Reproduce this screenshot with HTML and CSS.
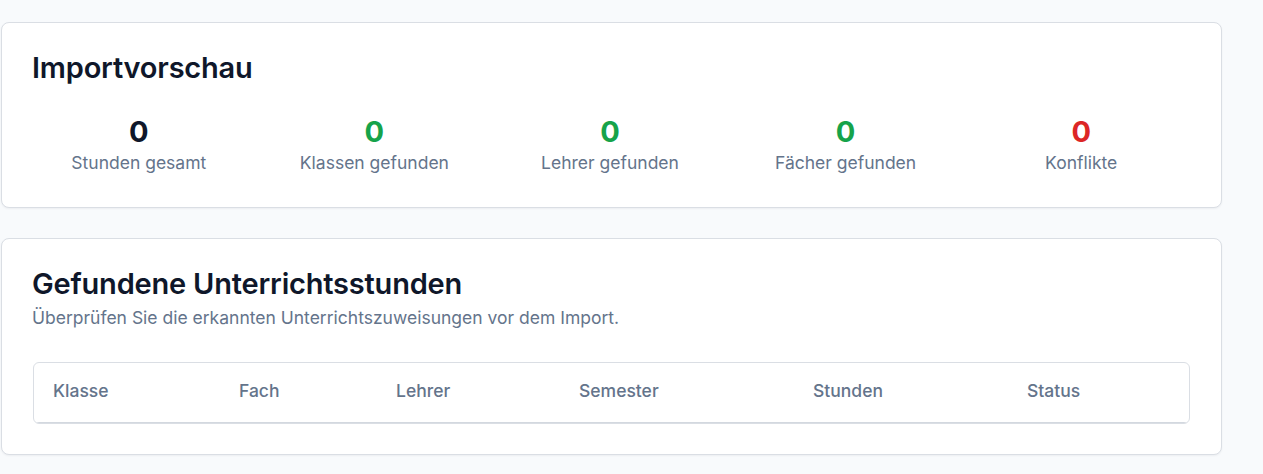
FILE: index.html
```html
<!DOCTYPE html>
<html lang="de">
<head>
<meta charset="utf-8">
<title>Importvorschau</title>
<link rel="stylesheet" href="styles.css">
</head>
<body>
<main class="page">
  <section class="card">
    <h2 class="card-title">Importvorschau</h2>
    <div class="stats">
      <div class="stat"><div class="stat-value">0</div><div class="stat-label">Stunden gesamt</div></div>
      <div class="stat"><div class="stat-value green">0</div><div class="stat-label">Klassen gefunden</div></div>
      <div class="stat"><div class="stat-value green">0</div><div class="stat-label">Lehrer gefunden</div></div>
      <div class="stat"><div class="stat-value green">0</div><div class="stat-label">Fächer gefunden</div></div>
      <div class="stat"><div class="stat-value red">0</div><div class="stat-label">Konflikte</div></div>
    </div>
  </section>
  <section class="card card-table">
    <h2 class="card-title">Gefundene Unterrichtsstunden</h2>
    <p class="card-desc">Überprüfen Sie die erkannten Unterrichtszuweisungen vor dem Import.</p>
    <div class="table-wrap">
      <table class="table">
        <thead>
          <tr>
            <th class="c1">Klasse</th>
            <th class="c2">Fach</th>
            <th class="c3">Lehrer</th>
            <th class="c4">Semester</th>
            <th class="c5">Stunden</th>
            <th class="c6">Status</th>
          </tr>
        </thead>
        <tbody></tbody>
      </table>
    </div>
  </section>
</main>
</body>
</html>
```
FILE: styles.css
```css
* { box-sizing: border-box; }
html, body { margin: 0; padding: 0; }
body {
  background: #f8fafc;
  font-family: Inter, "Noto Sans", "Liberation Sans", sans-serif;
  color: #0f172a;
}
.page {
  width: 1222px;
  padding: 22px 0 20px 1px;
  display: flex;
  flex-direction: column;
  gap: 30px;
}
.card {
  background: #fff;
  border: 1px solid #dadee4;
  border-radius: 8px;
  box-shadow: 0 1px 2px rgba(15, 23, 42, 0.05);
  padding: 27px 30px 31px 30px;
}
.card-table { padding-bottom: 30px; }
.card-title {
  margin: 0;
  font-size: 29px;
  line-height: 36px;
  font-weight: 600;
  letter-spacing: -0.2px;
  color: #0f172a;
}
.card-desc {
  margin: 3px 0 0;
  font-size: 17.5px;
  line-height: 26px;
  color: #64748b;
}
.stats {
  display: grid;
  grid-template-columns: repeat(5, 1fr);
  gap: 16px;
  margin: 28px 0 0 -3px;
}
.stat { text-align: center; }
.stat-value {
  font-size: 29px;
  line-height: 36px;
  font-weight: 700;
  color: #0f172a;
}
.stat-value.green { color: #16a34a; }
.stat-value.red { color: #dc2626; }
.stat-label {
  font-size: 17.5px;
  line-height: 26px;
  color: #64748b;
}
.table-wrap {
  margin: 31px 1px 0 1px;
  border: 1px solid #dadee4;
  border-radius: 6px;
  overflow: hidden;
}
.table {
  width: 100%;
  border-collapse: collapse;
  table-layout: fixed;
}
.table th {
  text-align: left;
  font-size: 17.5px;
  font-weight: 500;
  color: #64748b;
  height: 59px;
  padding: 0 19px 3px;
  border-bottom: 1px solid #d3d8df;
}
.c1 { width: 186px; }
.c2 { width: 157px; }
.c3 { width: 183px; }
.c4 { width: 234px; }
.c5 { width: 214px; }
.c6 { width: auto; }
```
